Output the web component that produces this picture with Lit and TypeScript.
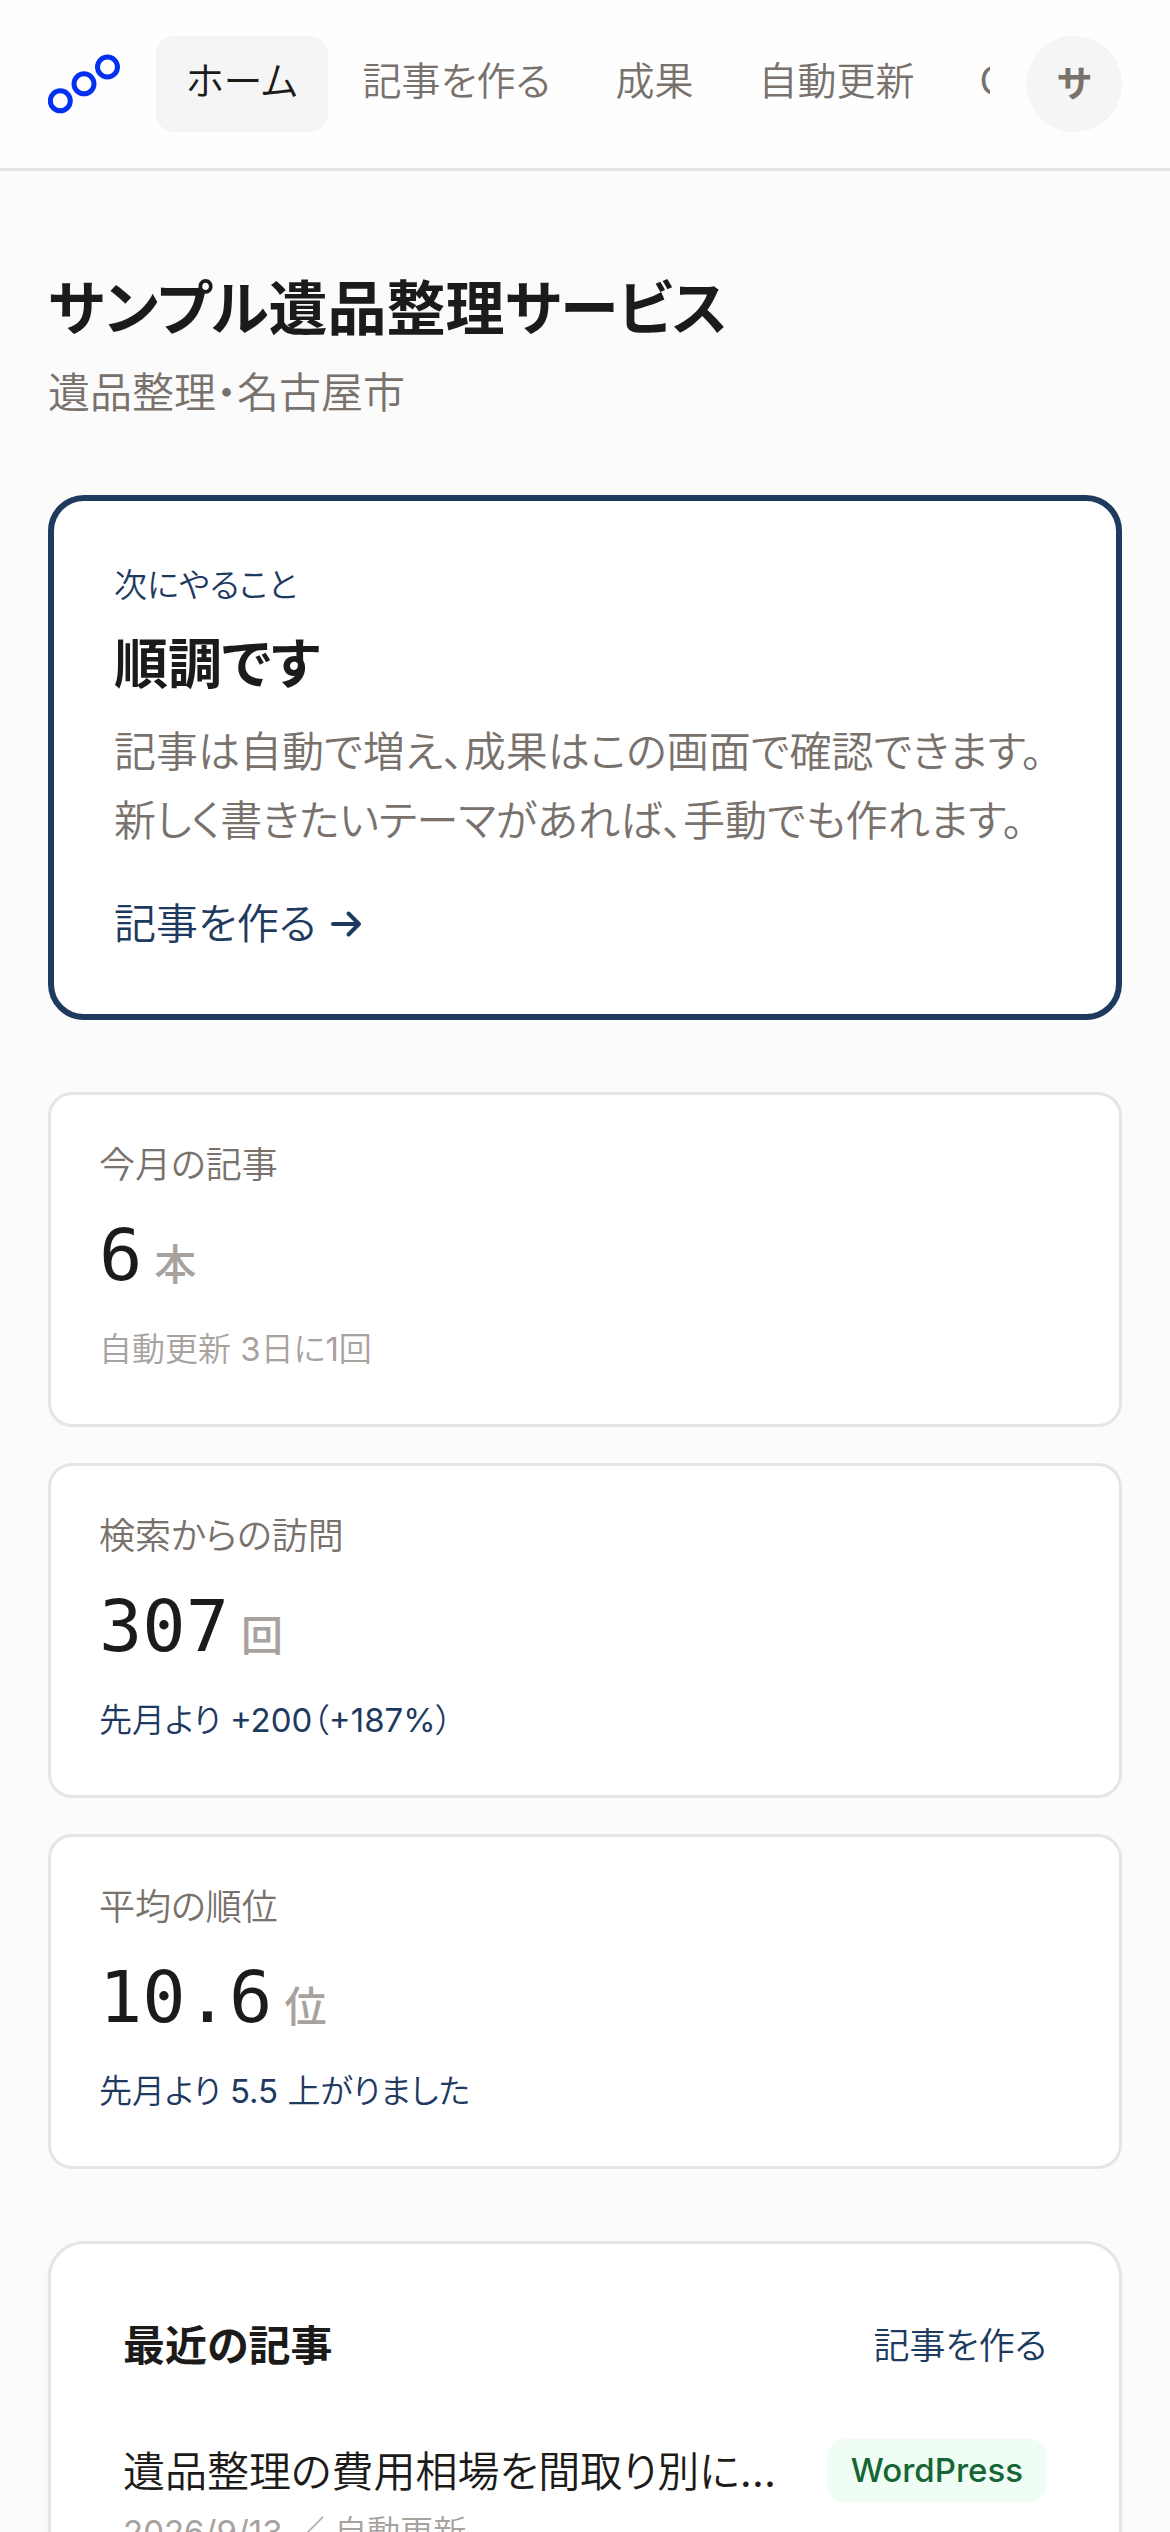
import { LitElement, html, svg, css } from "lit";
import { customElement, property } from "lit/decorators.js";
import { classMap } from "lit/directives/class-map.js";

interface Stat {
  label: string;
  value: string;
  unit: string;
  note: string;
  change: boolean;
}

const NAV = ["ホーム", "記事を作る", "成果", "自動更新", "Google連携"];

const STATS: Stat[] = [
  { label: "今月の記事", value: "6", unit: "本", note: "自動更新 3日に1回", change: false },
  { label: "検索からの訪問", value: "307", unit: "回", note: "先月より +200（+187%）", change: true },
  { label: "平均の順位", value: "10.6", unit: "位", note: "先月より 5.5 上がりました", change: true },
];

const ARTICLES = [
  { title: "遺品整理の費用相場を間取り別に解説", meta: "2026/9/13 ／ 自動更新", target: "WordPress" },
];

@customElement("app-header")
class AppHeader extends LitElement {
  static styles = css`
    :host {
      display: block;
    }
    .bar {
      display: flex;
      align-items: center;
      gap: 36px;
      padding: 36px 48px;
      background: #fefefe;
      border-bottom: 3px solid #e5e5e5;
    }
    .home,
    .logo {
      display: block;
      flex: none;
    }
    .nav {
      display: flex;
      flex: 1;
      min-width: 0;
      gap: 5px;
      overflow: hidden;
    }
    .tab {
      flex: none;
      padding: 0 30px 6px;
      border-radius: 18px;
      color: #78716c;
      font-size: 39px;
      line-height: 90px;
      text-decoration: none;
      white-space: nowrap;
    }
    .current {
      background: #f5f5f5;
      color: #1c1b1a;
    }
    .avatar {
      flex: none;
      width: 96px;
      height: 96px;
      padding: 0;
      border: 0;
      border-radius: 50%;
      background: #f5f5f5;
      color: #78716c;
      font-family: Inter, "Noto Sans CJK JP", sans-serif;
      font-feature-settings: inherit;
      font-size: 36px;
      font-weight: 700;
      line-height: 96px;
    }
  `;

  render() {
    return html`
      <header class="bar">
        <a class="home" href="#" aria-label="トップ">
          <svg class="logo" width="72" height="72" viewBox="0 0 72 72" fill="none" stroke="#0430f2" stroke-width="5">
            ${[[12.3, 52.8], [36, 35.8], [59.5, 19]].map(([x, y]) => svg`<circle cx=${x} cy=${y} r="10" />`)}
          </svg>
        </a>
        <nav class="nav">
          ${NAV.map((name, i) => html`<a class=${classMap({ tab: true, current: i === 0 })} href="#">${name}</a>`)}
        </nav>
        <button class="avatar">サ</button>
      </header>
    `;
  }
}

@customElement("stat-card")
class StatCard extends LitElement {
  @property({ attribute: false }) stat!: Stat;

  static styles = css`
    :host {
      display: block;
    }
    .card {
      padding: 40px 48px 48px;
      border: 3px solid #e5e5e5;
      border-radius: 24px;
      background: #fff;
    }
    .label {
      color: #78716c;
      font-size: 36px;
      line-height: 60px;
    }
    .figure {
      display: flex;
      align-items: baseline;
      gap: 12px;
      margin: 18px 0 15px;
      line-height: 84px;
    }
    .value {
      color: #1c1b1a;
      font-family: "DejaVu Sans Mono", monospace;
      font-size: 72px;
    }
    .unit {
      color: #a8a29e;
      font-family: Inter, "Noto Sans CJK JP", sans-serif;
      font-size: 42px;
      font-weight: 500;
    }
    .note {
      color: #a8a29e;
      font-size: 33px;
      line-height: 54px;
    }
    .change {
      color: #1e3a5f;
    }
  `;

  render() {
    const s = this.stat;
    return html`
      <div class="card">
        <div class="label">${s.label}</div>
        <div class="figure"><span class="value">${s.value}</span><span class="unit">${s.unit}</span></div>
        <div class=${classMap({ note: true, change: s.change })}>${s.note}</div>
      </div>
    `;
  }
}

@customElement("app-root")
class AppRoot extends LitElement {
  static styles = css`
    :host {
      display: block;
      height: 100vh;
      overflow: hidden;
      background: #fbfbfb;
      color: #1c1b1a;
      font-family: Inter, "Noto Sans CJK JP DemiLight", "Noto Sans CJK JP", sans-serif;
      font-feature-settings: "palt";
    }
    .page {
      display: flex;
      flex-direction: column;
      gap: 72px;
      padding: 96px 48px;
    }
    .title,
    .headline,
    .recent-title {
      margin: 0;
      font-family: Inter, "Noto Sans CJK JP", sans-serif;
      font-weight: 700;
    }
    .title {
      font-size: 59px;
      line-height: 84px;
    }
    .subtitle {
      margin: 12px 0 0;
      color: #78716c;
      font-size: 42px;
      line-height: 60px;
    }
    .next {
      padding: 60px;
      border: 6px solid #1e3a5f;
      border-radius: 36px;
      background: #fff;
    }
    .eyebrow {
      color: #1e3a5f;
      font-size: 33px;
      line-height: 48px;
    }
    .headline {
      margin: 20px 0 16px;
      font-size: 54px;
      line-height: 72px;
    }
    .body {
      margin: 0 0 39px;
      color: #78716c;
      font-size: 42px;
      line-height: 69px;
    }
    .action {
      display: flex;
      align-items: center;
      gap: 12px;
      color: #1e3a5f;
      font-size: 42px;
      line-height: 60px;
      text-decoration: none;
    }
    .stats {
      display: grid;
      gap: 36px;
    }
    .recent {
      padding: 72px;
      border: 3px solid #e5e5e5;
      border-radius: 36px;
      background: #fff;
      box-shadow: 0 3px 6px rgb(0 0 0 / 4%);
    }
    .recent-head {
      display: flex;
      align-items: center;
      justify-content: space-between;
      margin-bottom: 63px;
    }
    .recent-title {
      font-size: 42px;
      line-height: 60px;
    }
    .create {
      color: #1e3a5f;
      font-size: 36px;
      line-height: 60px;
      text-decoration: none;
    }
    .list {
      margin: 0;
      padding: 0;
      list-style: none;
    }
    .article {
      display: flex;
      align-items: flex-start;
      gap: 36px;
    }
    .article-text {
      flex: 1;
      min-width: 0;
    }
    .article-title {
      overflow: hidden;
      font-size: 42px;
      line-height: 66px;
      text-overflow: ellipsis;
      white-space: nowrap;
    }
    .article-meta {
      color: #a8a29e;
      font-size: 33px;
      line-height: 54px;
    }
    .badge {
      padding: 0 24px;
      border-radius: 18px;
      background: #f0fdf4;
      color: #166534;
      font-size: 33px;
      font-weight: 500;
      line-height: 63px;
    }
  `;

  render() {
    return html`
      <app-header></app-header>
      <main class="page">
        <div>
          <h1 class="title">サンプル遺品整理サービス</h1>
          <p class="subtitle">遺品整理・名古屋市</p>
        </div>
        <section class="next">
          <div class="eyebrow">次にやること</div>
          <h2 class="headline">順調です</h2>
          <p class="body">
            記事は自動で増え、成果はこの画面で確認できます。<br />新しく書きたいテーマがあれば、手動でも作れます。
          </p>
          <a class="action" href="#">
            記事を作る
            <svg width="42" height="42" viewBox="0 0 42 42" fill="none" stroke="currentColor" stroke-width="4" stroke-linecap="round" stroke-linejoin="round">
              <path d="M5 21H31M20.5 10.5L31 21L20.5 31.5" />
            </svg>
          </a>
        </section>
        <section class="stats">
          ${STATS.map((stat) => html`<stat-card .stat=${stat}></stat-card>`)}
        </section>
        <section class="recent">
          <div class="recent-head">
            <h2 class="recent-title">最近の記事</h2>
            <a class="create" href="#">記事を作る</a>
          </div>
          <ul class="list">
            ${ARTICLES.map(
              (a) => html`
                <li class="article">
                  <div class="article-text">
                    <div class="article-title">${a.title}</div>
                    <div class="article-meta">${a.meta}</div>
                  </div>
                  <span class="badge">${a.target}</span>
                </li>
              `,
            )}
          </ul>
        </section>
      </main>
    `;
  }
}
